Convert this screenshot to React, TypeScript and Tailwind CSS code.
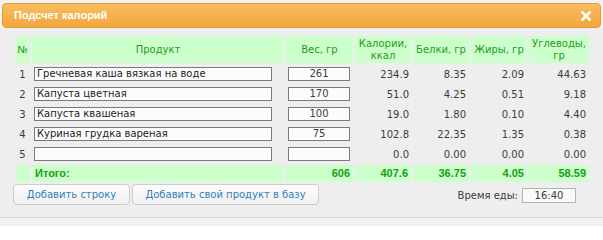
import React from "react";

const rows = [
  { n: 1, name: "Гречневая каша вязкая на воде", w: "261", k: "234.9", b: "8.35", f: "2.09", u: "44.63" },
  { n: 2, name: "Капуста цветная", w: "170", k: "51.0", b: "4.25", f: "0.51", u: "9.18" },
  { n: 3, name: "Капуста квашеная", w: "100", k: "19.0", b: "1.80", f: "0.10", u: "4.40" },
  { n: 4, name: "Куриная грудка вареная", w: "75", k: "102.8", b: "22.35", f: "1.35", u: "0.38" },
  { n: 5, name: "", w: "", k: "0.0", b: "0.00", f: "0.00", u: "0.00" },
];

const dv = { fontFamily: '"DejaVu Sans", sans-serif' };
const ls = { fontFamily: '"Liberation Sans", Arial, sans-serif' };

export default function App() {
  return (
    <div className="w-[603px] h-[226px] bg-[#f4f4f4] flex flex-col overflow-hidden" style={dv}>
      <div className="pt-[3px] px-[2px]">
        <div className="h-[25px] rounded-[4px] border border-[#e39a35] bg-gradient-to-b from-[#f8bd5f] to-[#f3a63c] flex items-center justify-between pl-[11px] pr-[9px]">
          <span className="text-white font-bold text-[11px] leading-none" style={ls}>Подсчет калорий</span>
          <svg width="10" height="10" viewBox="0 0 10 10">
            <path d="M1.5 1.5 L8.5 8.5 M8.5 1.5 L1.5 8.5" stroke="white" strokeWidth="2.6" strokeLinecap="square" />
          </svg>
        </div>
      </div>
      <div className="bg-[#eeeeee] flex-1 flex flex-col">
        <div className="pt-[8px] pl-[15px]">
          <div className="grid grid-cols-[15px_252px_67px_56px_56px_56px_60px] gap-[2px] text-[10px] text-[#3c3c3c]">
            {["№", "Продукт", "Вес, гр", "Калории,\nккал", "Белки, гр", "Жиры, гр", "Углеводы,\nгр"].map((h, i) => (
              <div
                key={i}
                className="h-[27px] bg-[#ccffcc] text-[#1f9c1f] flex items-center justify-center text-center whitespace-pre-line leading-[12px] text-[10px]"
              >
                {h}
              </div>
            ))}
            {rows.map((r) => (
              <React.Fragment key={r.n}>
                <div className="h-[18px] flex items-center justify-center">{r.n}</div>
                <div className="h-[18px] flex items-center pl-[2px]">
                  <div className="w-[238px] h-[14px] border border-[#7a7a7a] bg-[#fcfcfc] flex items-center pl-[2px] text-[#222] leading-none">
                    {r.name}
                  </div>
                </div>
                <div className="h-[18px] flex items-center pl-[2px]">
                  <div className="w-[62px] h-[14px] border border-[#7a7a7a] bg-[#fcfcfc] flex items-center justify-center leading-none">
                    {r.w}
                  </div>
                </div>
                <div className="h-[18px] flex items-center justify-end pr-[2px]">{r.k}</div>
                <div className="h-[18px] flex items-center justify-end pr-[3px]">{r.b}</div>
                <div className="h-[18px] flex items-center justify-end pr-[3px]">{r.f}</div>
                <div className="h-[18px] flex items-center justify-end pr-[3px]">{r.u}</div>
              </React.Fragment>
            ))}
            <div className="h-[17px] bg-[#ccffcc]" />
            <div className="h-[17px] bg-[#ccffcc] flex items-center pl-[3px] font-bold text-[11px] text-[#15a015]" style={ls}>Итого:</div>
            {["606", "407.6", "36.75", "4.05", "58.59"].map((v, i) => (
              <div key={i} className="h-[17px] bg-[#ccffcc] flex items-center justify-end pr-[3px] font-bold text-[11px] text-[#15a015]" style={ls}>
                {v}
              </div>
            ))}
          </div>
        </div>
        <div className="flex items-start pl-[13px] pt-[2px]">
          <div className="flex gap-[2px]">
            <button className="w-[117px] h-[21px] rounded-[4px] border border-[#cccccc] bg-gradient-to-b from-[#fdfdfd] to-[#f0f0f0] text-[#2f7fc0] text-[10px]">
              Добавить строку
            </button>
            <button className="w-[187px] h-[21px] rounded-[4px] border border-[#cccccc] bg-gradient-to-b from-[#fdfdfd] to-[#f0f0f0] text-[#2f7fc0] text-[10px]">
              Добавить свой продукт в базу
            </button>
          </div>
          <div className="ml-auto mr-[27px] mt-[4px] flex items-center gap-[4px] text-[10px] text-[#3c3c3c]">
            <span>Время еды:</span>
            <div className="w-[54px] h-[15px] border border-[#a8bba8] bg-[#fafafa] flex items-center justify-center leading-none">16:40</div>
          </div>
        </div>
      </div>
      <div className="h-[9px] border-t border-[#d9d9d9] bg-[#f2f2f2]" />
    </div>
  );
}
